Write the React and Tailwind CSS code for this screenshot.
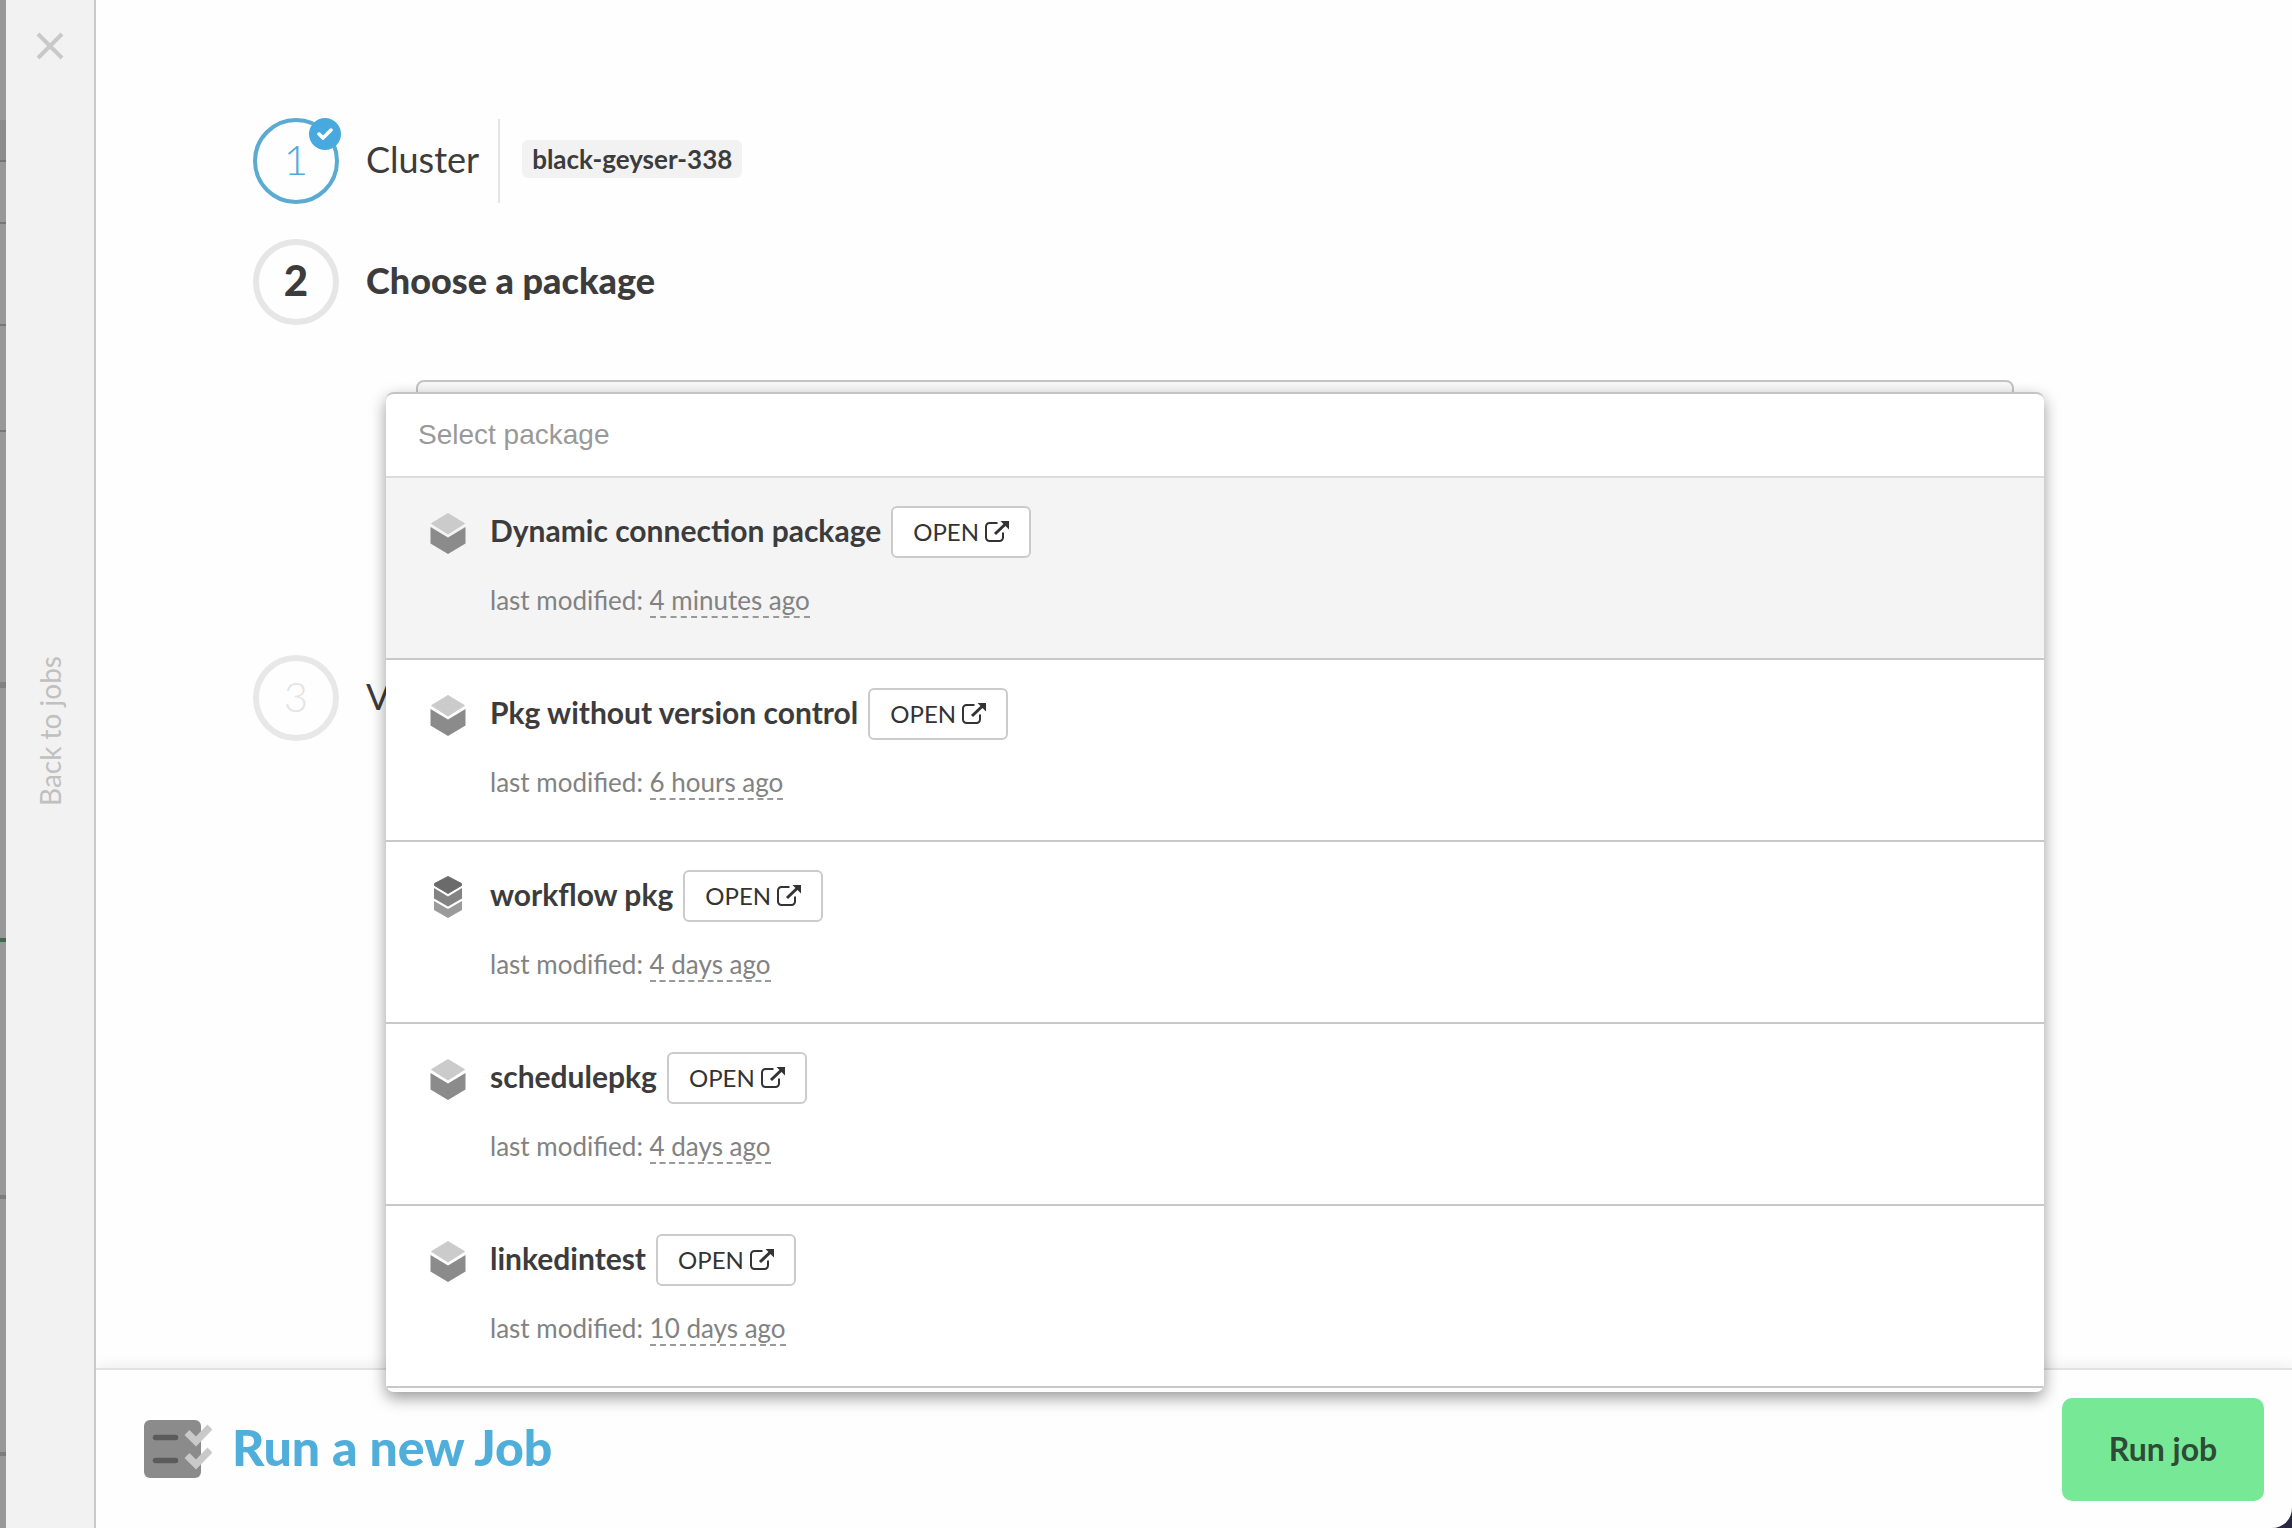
const packages = [
    { name: 'Dynamic connection package', modified: '4 minutes ago', kind: 'dataflow', active: true },
    { name: 'Pkg without version control', modified: '6 hours ago', kind: 'dataflow' },
    { name: 'workflow pkg', modified: '4 days ago', kind: 'workflow' },
    { name: 'schedulepkg', modified: '4 days ago', kind: 'dataflow' },
    { name: 'linkedintest', modified: '10 days ago', kind: 'dataflow' },
]

function DataflowIcon() {
    return (
        <svg className="w-9 h-[42px]" viewBox="0 0 36 42" aria-hidden="true">
            <path d="M18 1.5 34.5 11.5 18 22 1.5 11.5z" fill="#cbcbcb" stroke="#cbcbcb" strokeLinejoin="round" />
            <path d="M.5 15 18 25.500 35.5 15v16.500L18 42 .5 31.500z" fill="#8b8b8b" />
        </svg>
    )
}

function WorkflowIcon() {
    return (
        <svg className="w-9 h-[42px]" viewBox="0 0 36 42" aria-hidden="true">
            <path d="M18 .5 31.500 7.500v2L18 17.500 4.500 9.500v-2z" fill="#6b6b6b" stroke="#6b6b6b" strokeLinejoin="round" />
            <path d="M4 12 18 20.500 32 12v10.500L18 30.500 4 22.500z" fill="#838383" />
            <path d="M4 25 18 33 32 25v9L18 42 4 34z" fill="#9b9b9b" />
        </svg>
    )
}

function OpenIcon() {
    return (
        <svg className="w-6 h-6" viewBox="0 0 24 24" fill="none" aria-hidden="true">
            <path d="M12.500 3H4.500A3.500 3.500 0 0 0 1 6.500v11A3.500 3.500 0 0 0 4.500 21h10a3.500 3.500 0 0 0 3.500-3.500V12.500" stroke="#333" strokeWidth="2" />
            <path d="M10 14 20.500 4" stroke="#333" strokeWidth="3" />
            <path d="M15.500 1H24v8.500z" fill="#333" />
        </svg>
    )
}

function JobIcon() {
    return (
        <svg className="w-[68px] h-[58px]" viewBox="0 0 68 58" aria-hidden="true">
            <rect width="57" height="58" rx="6" fill="#8b8b8b" />
            <path d="M11.500 17.500h20M11.500 40.500h20" stroke="#5b5b5b" strokeWidth="5.500" strokeLinecap="round" />
            <path d="M43 12.500 52 21.500 66 7M43 35.500 52 44.500 66 30" fill="none" stroke="#c9c9c9" strokeWidth="7" />
        </svg>
    )
}

function Step({ number, title, state, children }) {
    const circle = {
        done: 'border-4 border-[#5aaad2] text-[#4dabdb] font-light',
        current: 'border-[6px] border-[#e6e6e6] text-[#3c3c3c] font-black',
        pending: 'border-[6px] border-[#e8e8e8] text-[#e4e4e4] font-light',
    }[state]

    return (
        <div className="flex items-center gap-[27px]">
            <div className={`relative flex items-center justify-center w-[86px] h-[86px] pb-1 rounded-full text-[42px] shrink-0 ${circle}`}>
                {number}
                {state === 'done' && (
                    <span className="absolute -top-1 -right-[6px] flex items-center justify-center w-8 h-8 rounded-full bg-[#47a9de]">
                        <svg className="w-4 h-3" viewBox="0 0 16 12" fill="none" aria-hidden="true">
                            <path d="M2 6 6 10 14 2" stroke="#fff" strokeWidth="3.500" strokeLinecap="round" />
                        </svg>
                    </span>
                )}
            </div>
            <h2 className={`pb-1 text-4xl ${state === 'current' ? 'font-black' : ''}`}>{title}</h2>
            {children}
        </div>
    )
}

function PackageRow({ pkg }) {
    return (
        <li className={`flex gap-6 h-[182px] pt-7 pl-[44px] border-b-2 border-[#c8c8c8] ${pkg.active ? 'bg-[#f4f4f4]' : 'bg-white'}`}>
            <div className="pt-[6px]">{pkg.kind === 'workflow' ? <WorkflowIcon /> : <DataflowIcon />}</div>
            <div>
                <div className="flex items-center gap-[10px]">
                    <h3 className="pb-[3px] text-[30px] font-bold">{pkg.name}</h3>
                    <button type="button" className="flex items-center gap-[6px] h-[52px] px-5 bg-white border-2 border-[#cbcbcb] rounded-md text-2xl text-[#333]">
                        OPEN
                        <OpenIcon />
                    </button>
                </div>
                <p className="mt-6 text-[26px] leading-9 text-[#828282]">
                    last modified: <span className="inline-block leading-8 border-b-2 border-dashed border-[#999]">{pkg.modified}</span>
                </p>
            </div>
        </li>
    )
}

/* Sliver of the jobs page left visible beside the panel */
function PageBehind() {
    return (
        <div className="flex flex-col w-[6px] shrink-0 bg-[#989898]">
            <div className="h-[120px]" />
            <div className="h-[42px] bg-[#8c8c8c] border-b-2 border-[#757575]" />
            <div className="h-[62px] border-b-2 border-[#777]" />
            <div className="h-[102px] border-b-2 border-[#777]" />
            <div className="h-[106px] border-b-2 border-[#777]" />
            <div className="h-[256px] border-b-[6px] border-[#828282]" />
            <div className="h-[254px] border-b-4 border-[#3f6a4c]" />
            <div className="h-[257px] border-b-4 border-[#7d7d7d]" />
            <div className="h-[257px] border-b-4 border-[#7d7d7d]" />
        </div>
    )
}

export default function App() {
    return (
        <div className="min-h-screen flex bg-[#2a2740] font-['Lato',sans-serif] text-[#3c3c3c]">
            <PageBehind />

            <aside className="flex flex-col items-center w-[90px] shrink-0 pt-8 bg-[#f2f2f2] border-r-2 border-[#c9c9c9]">
                <button type="button" aria-label="Close">
                    <svg className="w-7 h-7" viewBox="0 0 28 28" aria-hidden="true">
                        <path d="M2 2 26 26M26 2 2 26" stroke="#c9c9c9" strokeWidth="4" />
                    </svg>
                </button>
                <a href="#jobs" className="mt-[596px] rotate-180 [writing-mode:vertical-rl] text-[28px] text-[#c0c0c0]">Back to jobs</a>
            </aside>

            <div className="flex-1 flex flex-col bg-[#fefefe] rounded-br-[20px] overflow-hidden">
                <main className="relative z-10 flex-1 pt-[118px] pl-[157px] pr-[278px]">
                    <Step number="1" title="Cluster" state="done">
                        <div className="flex items-center h-[84px] pl-[22px] -ml-2 border-l-2 border-[#e4e4e4]">
                            <span className="mb-1 px-[10px] rounded-md bg-[#f2f2f2] text-[26px] leading-[38px] font-bold">black-geyser-338</span>
                        </div>
                    </Step>

                    <div className="mt-[35px]">
                        <Step number="2" title="Choose a package" state="current" />
                    </div>

                    <div className="relative mt-[55px] ml-[163px]">
                        <button type="button" aria-label="Package" className="block w-full h-20 bg-[#f8f8f8] border-2 border-[#c4c4c4] rounded-lg" />

                        <div className="absolute top-3 -inset-x-[30px] bg-white border-t-2 border-[#c4c4c4] rounded-lg shadow-[0_6px_16px_rgba(0,0,0,0.4)] overflow-hidden">
                            <input
                                type="text"
                                aria-label="Search packages"
                                placeholder="Select package"
                                className="block w-full h-[84px] px-8 border-b-2 border-[#dcdcdc] font-['Liberation_Sans',sans-serif] text-[28px] placeholder:text-[#999] outline-none"
                            />
                            <ul className="pb-1">
                                {packages.map((pkg) => (
                                    <PackageRow key={pkg.name} pkg={pkg} />
                                ))}
                            </ul>
                        </div>
                    </div>

                    <div className="mt-[195px]">
                        <Step number="3" title="Variables" state="pending" />
                    </div>
                </main>

                <footer className="flex items-center justify-between h-[160px] pl-12 pr-7 border-t-2 border-[#e2e2e2] shadow-[0_-4px_12px_rgba(0,0,0,0.06)]">
                    <div className="flex items-center gap-5">
                        <JobIcon />
                        <h1 className="pb-1 text-[50px] leading-[60px] font-black text-[#50aedb]">Run a new Job</h1>
                    </div>
                    <button type="button" className="w-[202px] h-[103px] rounded-[10px] bg-[#76e896] text-[32px] font-bold text-[#2f4a36]">Run job</button>
                </footer>
            </div>
        </div>
    )
}
